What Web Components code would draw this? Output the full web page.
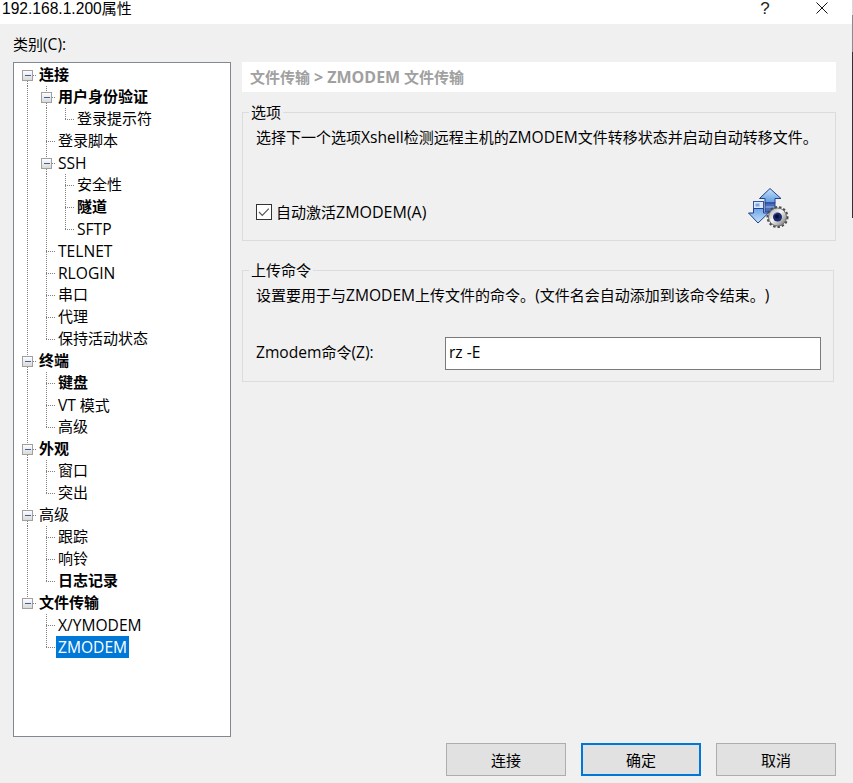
<!DOCTYPE html>
<html lang="zh"><head><meta charset="utf-8"><title>192.168.1.200属性</title>
<style>
html,body{margin:0;padding:0;background:#f0f0f0}
body{font:15px/22px "Open Sans","Noto Sans CJK SC",sans-serif;color:#000;width:853px;height:783px;overflow:hidden;text-spacing-trim:space-all}
</style></head><body>
<x-dialog>
  <x-titlebar slot="title">192.168.1.200属性</x-titlebar>
  <span slot="catlabel">类别(C):</span>
  <x-tree slot="tree">
    <x-row text="连接" b cells="x"></x-row>
    <x-row text="用户身份验证" b cells="vX"></x-row>
    <x-row text="登录提示符" cells="vvl"></x-row>
    <x-row text="登录脚本" cells="vt"></x-row>
    <x-row text="SSH" cells="vX"></x-row>
    <x-row text="安全性" cells="vvt"></x-row>
    <x-row text="隧道" b cells="vvt"></x-row>
    <x-row text="SFTP" cells="vvl"></x-row>
    <x-row text="TELNET" cells="vt"></x-row>
    <x-row text="RLOGIN" cells="vt"></x-row>
    <x-row text="串口" cells="vt"></x-row>
    <x-row text="代理" cells="vt"></x-row>
    <x-row text="保持活动状态" cells="vl"></x-row>
    <x-row text="终端" b cells="X"></x-row>
    <x-row text="键盘" b cells="vt"></x-row>
    <x-row text="VT 模式" cells="vt"></x-row>
    <x-row text="高级" cells="vl"></x-row>
    <x-row text="外观" b cells="X"></x-row>
    <x-row text="窗口" cells="vt"></x-row>
    <x-row text="突出" cells="vl"></x-row>
    <x-row text="高级" cells="X"></x-row>
    <x-row text="跟踪" cells="vt"></x-row>
    <x-row text="响铃" cells="vt"></x-row>
    <x-row text="日志记录" b cells="vl"></x-row>
    <x-row text="文件传输" b cells="e"></x-row>
    <x-row text="X/YMODEM" cells="_t"></x-row>
    <x-row text="ZMODEM" cells="_l" selected></x-row>
  </x-tree>
  <x-crumb slot="panel">文件传输 &gt; ZMODEM 文件传输</x-crumb>
  <x-group slot="panel" legend="选项" style="height:140px;margin-top:9px">
    <div style="white-space:nowrap">选择下一个选项Xshell检测远程主机的ZMODEM文件转移状态并启动自动转移文件。</div>
    <div style="display:flex;justify-content:space-between;align-items:flex-start;margin-top:39px;padding-right:46px;height:41px">
      <x-check style="margin-top:14px;--lat:16px">自动激活ZMODEM(A)</x-check>
      <x-transfer-icon></x-transfer-icon>
    </div>
  </x-group>
  <x-group slot="panel" legend="上传命令" style="height:123px;margin-top:18px;width:592px">
    <div style="white-space:nowrap">设置要用于与ZMODEM上传文件的命令。(文件名会自动添加到该命令结束。)</div>
    <div style="display:flex;justify-content:space-between;align-items:center;margin-top:31px;padding-right:12px">
      <span style="margin-top:-4px">Zmodem命令(Z):</span>
      <x-field value="rz -E"></x-field>
    </div>
  </x-group>
  <x-button slot="buttons">连接</x-button>
  <x-button slot="buttons" default>确定</x-button>
  <x-button slot="buttons">取消</x-button>
</x-dialog>
<script>
/* Latin runs in the reference's UI font are about 4% wider than Open Sans at the CJK size */
function latin(root){
  const w=document.createTreeWalker(root,NodeFilter.SHOW_TEXT);const ns=[];
  while(w.nextNode()){const n=w.currentNode;if(n.parentNode.localName!=='style'&&n.parentNode.localName!=='script'&&/[A-Za-z0-9]/.test(n.data)&&n.data.trim())ns.push(n);}
  ns.forEach(n=>{
    const f=document.createDocumentFragment();
    n.data.split(/([\x21-\x7e](?:[\x20-\x7e]*[\x21-\x7e])?)/).forEach((p,i)=>{
      if(!p)return;
      if(i%2){const s=document.createElement('span');s.style.fontSize='var(--lat,15.6px)';s.textContent=p;f.appendChild(s);}
      else f.appendChild(document.createTextNode(p));
    });
    n.parentNode.replaceChild(f,n);
  });
}
function def(name, html, extra){
  const t=document.createElement('template');t.innerHTML=html;
  customElements.define(name,class extends HTMLElement{
    constructor(){super();this.attachShadow({mode:'open'}).appendChild(t.content.cloneNode(true));}
    connectedCallback(){extra&&extra(this,this.shadowRoot);}
  });
}
def('x-dialog',`<style>
:host{display:flex;flex-direction:column;width:853px;height:783px;box-sizing:border-box;position:relative}
:host::after{content:"";position:absolute;right:0;top:0;width:1px;height:218px;background:linear-gradient(#d8d8d8 15px,#8a8a8a 15px,#8a8a8a 52px,#333 52px)}
.main{display:flex;gap:11px;padding:0 17px 0 13px;height:713px;box-sizing:border-box}
.left{width:218px;display:flex;flex-direction:column}
.lab{height:38px;line-height:22px;padding-top:9px;box-sizing:border-box}
.right{width:594px;padding-top:38px;box-sizing:border-box;display:flex;flex-direction:column;align-items:flex-start}
.foot{display:flex;justify-content:flex-end;gap:15px;padding:6px 17px 0 0}
</style>
<slot name="title"></slot>
<div class="main"><div class="left"><div class="lab"><slot name="catlabel"></slot></div><slot name="tree"></slot></div>
<div class="right"><slot name="panel"></slot></div></div>
<div class="foot"><slot name="buttons"></slot></div>`);
def('x-titlebar',`<style>
:host{display:flex;height:24px;background:#fff;align-items:flex-start;padding-left:2px;flex:none;font-family:"Liberation Sans","Noto Sans CJK SC",sans-serif}
.t{flex:1;line-height:18px}
.h{width:12px;text-align:center;margin-right:45px;font-size:17px;line-height:18px;color:#222}
svg{margin:2px 25px 0 0;display:block}
</style><span class="t"><slot></slot></span><span class="h">?</span>
<svg width="12" height="12" viewBox="0 0 12 12"><path d="M.5.5l11 11M11.5.5l-11 11" stroke="#111" stroke-width="1" fill="none"/></svg>`);
def('x-tree',`<style>
:host{display:block;box-sizing:border-box;width:218px;height:675px;background:#fff;border:1px solid #828790;padding:1px 0 0 4px}
</style><slot></slot>`);
const dot='stroke="#808080" stroke-width="1" stroke-dasharray="1 1" shape-rendering="crispEdges" fill="none"';
const exp=`<defs><linearGradient id="g" x1="0" y1="0" x2="0" y2="1"><stop offset="0" stop-color="#fff"/><stop offset="1" stop-color="#d8d8d8"/></linearGradient></defs><rect x="4.500" y="6.500" width="10" height="10" fill="url(#g)" stroke="#a0a0a0"/><path d="M6.500 11.500h6" stroke="#3f5f9f" fill="none" shape-rendering="crispEdges"/>`;
const H=`<path d="M9 11.500h10" ${dot}/>`, HE=`<path d="M15 11.500h4" ${dot}/>`;
const cells={
 v:`<path d="M9.500 0v22" ${dot}/>`,
 t:`<path d="M9.500 0v22" ${dot}/>`+H,
 l:`<path d="M9.500 0v12" ${dot}/>`+H,
 _:'',
 x:`<path d="M9.500 17v5" ${dot}/>`+HE+exp,
 X:`<path d="M9.500 0v6M9.500 17v5" ${dot}/>`+HE+exp,
 e:`<path d="M9.500 0v6" ${dot}/>`+HE+exp
};
def('x-row',`<style>
:host{display:flex;height:22px;align-items:stretch}
svg{display:block;flex:none}
.l{padding:0 2px 2px;line-height:20px;white-space:nowrap;color:#000}
.l.lat{padding:1px 2px 1px}
:host([b]) .l{font-weight:700}
:host([selected]) .l{background:#0078d7;color:#fff}
</style><span class="c" style="display:flex"></span><span class="l"></span>`,(el,s)=>{
  const l=s.querySelector('.l'),txt=el.getAttribute('text');l.textContent=txt;
  if(/[A-Za-z]/.test(txt))l.classList.add('lat');latin(l);
  s.querySelector('.c').innerHTML=[...el.getAttribute('cells')].map(c=>`<svg width="19" height="22" viewBox="0 0 19 22">${cells[c]}</svg>`).join('');
});
def('x-crumb',`<style>
:host{--lat:16px;display:block;width:594px;height:30px;background:#fff;color:#a0a0a0;font-weight:700;line-height:30px;padding-left:8px;box-sizing:border-box;white-space:pre;flex:none}
</style><slot></slot>`);
def('x-group',`<style>
:host{display:block;box-sizing:border-box;width:594px;flex:none}
fieldset{margin:0;height:100%;box-sizing:border-box;border:1px solid #dcdcdc;padding:3px 0 0 13px;min-width:0}
legend{padding:0 2px;margin-left:-7px;line-height:22px}
</style><fieldset><legend></legend><slot></slot></fieldset>`,(el,s)=>{s.querySelector('legend').textContent=el.getAttribute('legend');});
def('x-check',`<style>
:host{display:inline-flex;align-items:center;gap:4px;height:22px;white-space:nowrap}
svg{display:block;flex:none}
</style><svg width="16" height="16" viewBox="0 0 16 16"><rect x=".5" y=".5" width="15" height="15" fill="#fff" stroke="#333"/><path d="M3 8l3.300 3.300L12.800 4.600" fill="none" stroke="#555" stroke-width="1.200"/></svg><span><slot></slot></span>`);
def('x-field',`<style>
:host{display:block;width:376px;height:33px;box-sizing:border-box;border:1px solid #7a7a7a;background:#fff;padding-left:3px;line-height:29px;font-size:15.6px}
</style><span></span>`,(el,s)=>{s.querySelector('span').textContent=el.getAttribute('value');});
def('x-button',`<style>
:host{display:flex;align-items:center;justify-content:center;width:120px;height:33px;box-sizing:border-box;background:#e1e1e1;border:1px solid #adadad}
:host([default]){border:2px solid #0078d7}
</style><slot></slot>`);
def('x-transfer-icon',`<style>:host{display:block;width:42px;height:41px}svg{display:block}</style>
<svg width="42" height="41" viewBox="0 0 42 41">
<defs>
<linearGradient id="a" x1="0" y1="0" x2="0" y2="1"><stop offset="0" stop-color="#c6e2fa"/><stop offset="1" stop-color="#5c9ade"/></linearGradient>
<linearGradient id="b" x1="0" y1="0" x2="0" y2="1"><stop offset="0" stop-color="#6aa4e6"/><stop offset="1" stop-color="#c6e2fa"/></linearGradient>
<linearGradient id="c" x1="0" y1="0" x2="1" y2="1"><stop offset="0" stop-color="#a8a8a8"/><stop offset=".45" stop-color="#f6f6f6"/><stop offset="1" stop-color="#666"/></linearGradient>
</defs>
<path d="M23 1.500L34 11.500H28V16H18V11.500H12.500Z" fill="url(#a)" stroke="#24408e"/>
<rect x="18" y="16" width="10" height="9" fill="#4a6cbc" stroke="#24408e"/>
<path d="M18.500 20h9" stroke="#9cc0ea"/>
<rect x="6.500" y="14.500" width="10" height="7" fill="#dbe9fa" stroke="#3454a8"/>
<rect x="8.500" y="16.500" width="4" height="3" fill="#7aa8e4"/>
<path d="M6.500 21.500h10V26H21.500L11 36 1.500 26h5Z" fill="url(#b)" stroke="#24408e"/>
<g transform="translate(30.500 30)">
<circle r="10" fill="none" stroke="#4a4a4a" stroke-width="2" stroke-dasharray="2.400 2"/>
<circle r="9" fill="url(#c)" stroke="#6a6a6a"/>
<circle r="4.500" fill="#1b2a6b"/><circle r="2" cx="-.5" cy="-.5" fill="#0b1030"/>
<path d="M-3.500-2.500a4.500 4.500 0 0 1 3-2" stroke="#7fa0e0" fill="none"/>
</g></svg>`);
latin(document.body);
</script>
</body></html>
